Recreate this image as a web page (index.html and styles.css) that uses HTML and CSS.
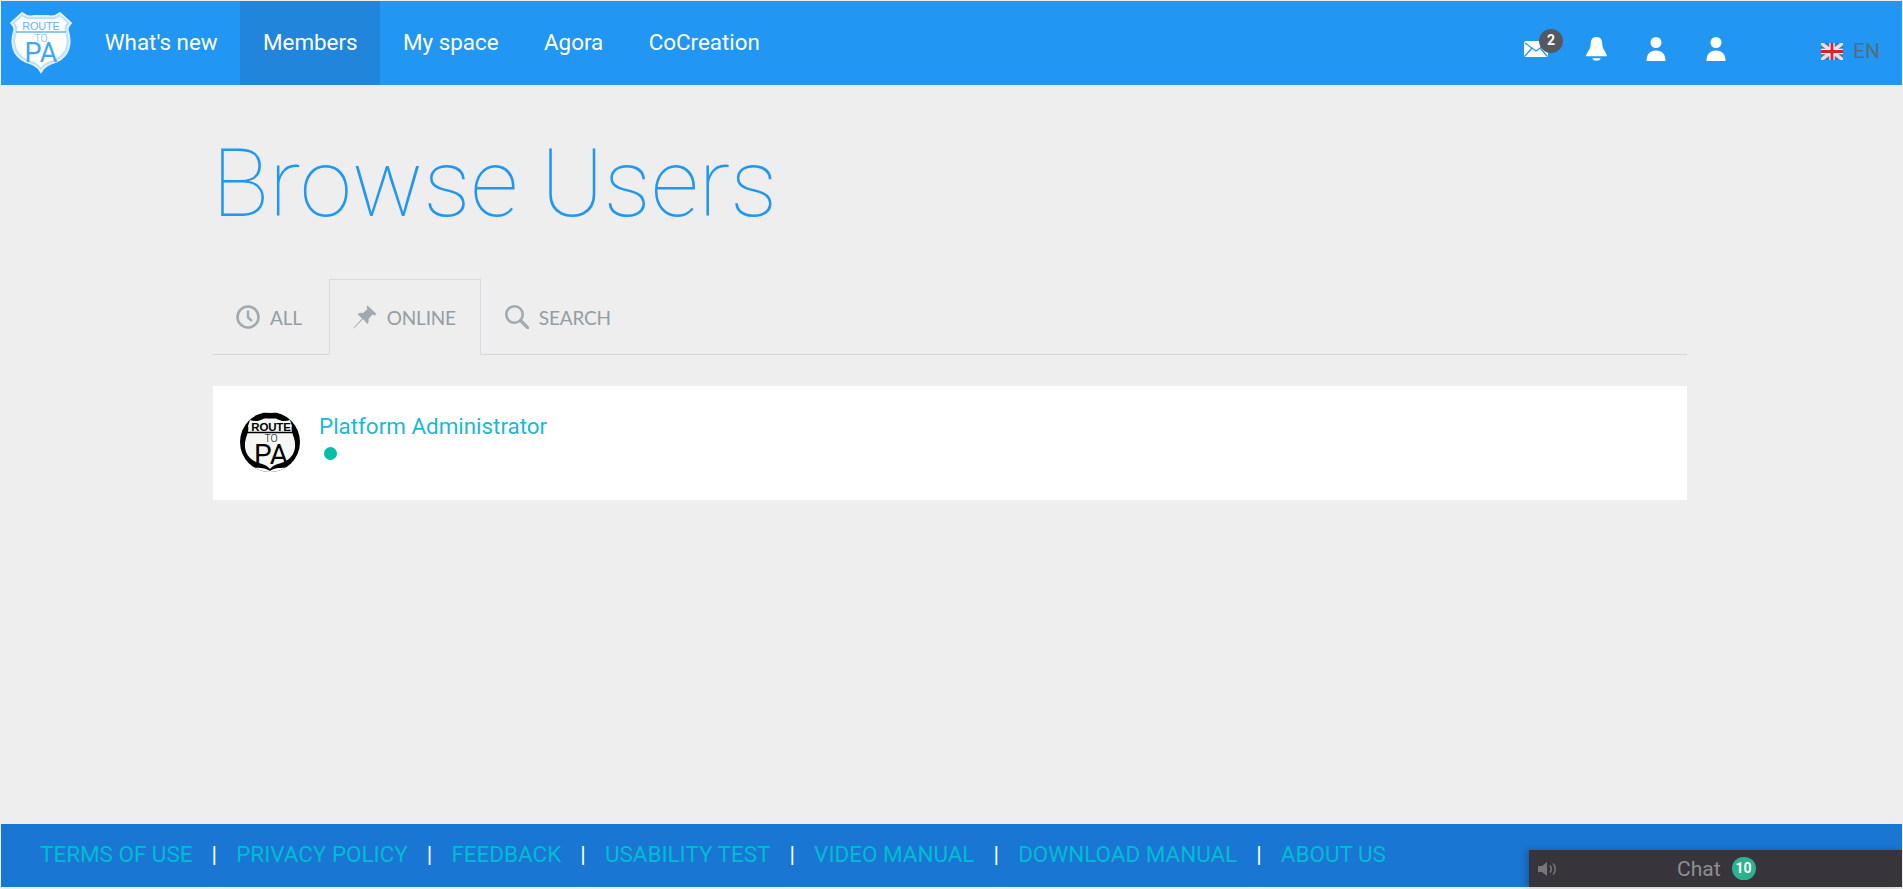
FILE: index.html
```html
<!DOCTYPE html>
<html lang="en">
<head>
<meta charset="utf-8">
<title>Browse Users</title>
<link rel="stylesheet" href="styles.css">
</head>
<body>
<div class="page">
  <header class="topbar">
    <a class="brand" href="#">
      <svg class="brand-logo" viewBox="0 0 64 62" width="64" height="62">
        <path d="M13 1 C17 4 21 5 24 4 H40 C43 5 47 4 51 1 L62 11 C59 14 58 16 59 19 C63 32 60 44 47 50 C41 52 35 54 32 60 C29 54 23 52 17 50 C4 44 1 32 5 19 C6 16 5 14 2 11 Z" fill="#bfe0fb" stroke="#e3f2fd" stroke-width="1.800"/>
        <path d="M13 4.500 C17 7 21 8 24 7 H40 C43 8 47 7 51 4.500 L58 11 C55.500 14 55 16 56 19 C60 31 57 42 45.500 47.500 C40 49.500 35 51 32 55.500 C29 51 24 49.500 18.500 47.500 C7 42 4 31 8 19 C9 16 8.500 14 6 11 Z" fill="#fff"/>
        <path d="M7 20 H57" stroke="#64b5f6" stroke-width="1.300"/>
        <text class="logo-route" x="32" y="18" text-anchor="middle">ROUTE</text>
        <text class="logo-to" x="32" y="30" text-anchor="middle">TO</text>
        <text class="logo-pa" x="32" y="50" text-anchor="middle">PA</text>
      </svg>
    </a>
    <nav class="mainnav">
      <a href="#" class="nav-item">What's new</a>
      <a href="#" class="nav-item is-active">Members</a>
      <a href="#" class="nav-item">My space</a>
      <a href="#" class="nav-item">Agora</a>
      <a href="#" class="nav-item">CoCreation</a>
    </nav>
    <div class="tools">
      <a href="#" class="tool tool-mail">
        <svg viewBox="0 0 24 16" width="24" height="16"><rect x="0" y="0" width="24" height="16" rx="2.500" fill="#fff"/><path d="M1 2 L12 10 L23 2 M1 15 L8 7 M23 15 L16 7" fill="none" stroke="#2196f3" stroke-width="1.300"/></svg>
        <span class="mail-badge">2</span>
      </a>
      <a href="#" class="tool">
        <svg viewBox="0 0 24 26" width="23" height="25"><path d="M12 0 C16.500 0 18 3 18 7 C18 13 22 15 23 20 H1 C2 15 6 13 6 7 C6 3 7.500 0 12 0 Z" fill="#fff"/><path d="M7.500 22 H16.500 C15.500 25.500 8.500 25.500 7.500 22 Z" fill="#fff"/></svg>
      </a>
      <a href="#" class="tool">
        <svg viewBox="0 0 20 25" width="20" height="25"><circle cx="10" cy="5.500" r="5.500" fill="#fff"/><path d="M0.500 24 C0.500 17 4 13.500 10 13.500 C16 13.500 19.500 17 19.500 24 Z" fill="#fff"/></svg>
      </a>
      <a href="#" class="tool">
        <svg viewBox="0 0 20 25" width="20" height="25"><circle cx="10" cy="5.500" r="5.500" fill="#fff"/><path d="M0.500 24 C0.500 17 4 13.500 10 13.500 C16 13.500 19.500 17 19.500 24 Z" fill="#fff"/></svg>
      </a>
    </div>
    <a href="#" class="lang">
      <svg viewBox="0 0 22 17" width="22" height="17"><rect width="22" height="17" fill="#5a6a9c"/><path d="M0 0 L22 17 M22 0 L0 17" stroke="#e6dfe2" stroke-width="3.500"/><path d="M11 0 V17 M0 8.500 H22" stroke="#eee" stroke-width="5.500"/><path d="M11 0 V17 M0 8.500 H22" stroke="#d8232f" stroke-width="2.800"/></svg>
      <span>EN</span>
    </a>
  </header>

  <main class="content">
    <h1 class="title">Browse Users</h1>
    <div class="tabs">
      <a href="#" class="tab tab-all">
        <svg viewBox="0 0 24 24" width="24" height="24"><circle cx="12" cy="12" r="10.500" fill="none" stroke="#a1aab0" stroke-width="2.600"/><path d="M12 5.500 V12.500 L16 16" fill="none" stroke="#a1aab0" stroke-width="2.400"/></svg>
        <span>ALL</span>
      </a>
      <a href="#" class="tab is-current">
        <svg viewBox="0 0 24 24" width="24" height="24"><path d="M14.500 0.500 L23.500 9 L21.500 10.500 L19.500 9.500 L15.500 14 C16 16 15.500 17.500 14.500 19 L10 14 L1 23.500 L0.500 23 L9 13.500 L4.500 9 C6 8 8 7.500 10 8 L14.500 4 L13.500 2 Z" fill="#a1aab0"/></svg>
        <span>ONLINE</span>
      </a>
      <a href="#" class="tab">
        <svg viewBox="0 0 24 24" width="24" height="24"><circle cx="9.500" cy="9.500" r="8.200" fill="none" stroke="#a1aab0" stroke-width="2.600"/><path d="M15.500 15.500 L23 23" fill="none" stroke="#a1aab0" stroke-width="3.200" stroke-linecap="round"/></svg>
        <span>SEARCH</span>
      </a>
    </div>
    <div class="user-card">
      <svg class="avatar" viewBox="0 0 60 60" width="60" height="60">
        <defs><clipPath id="av"><circle cx="30" cy="30" r="30"/></clipPath></defs>
        <g clip-path="url(#av)">
          <rect width="60" height="60" fill="#000"/>
          <path d="M0 0 H60 V14 C52 3 42 3 38 1 H22 C18 3 8 3 0 14 Z" fill="#fff"/>
          <path d="M0 60 H60 V50 C50 59 38 53 30 59 C22 53 10 59 0 50 Z" fill="#fff"/>
          <path d="M10 8 C15 10 20 9 24 6.500 H36 C40 9 45 10 50 8 L52 14 C51 17 52 20 54 26 C57 36 54 45 44 50 C38 52 33 53 30 57 C27 53 22 52 16 50 C6 45 3 36 6 26 C8 20 9 17 8 14 Z" fill="#f4f7f4"/>
          <path d="M7 20.500 H53" stroke="#000" stroke-width="1.500"/>
        </g>
        <text class="av-route" x="31" y="19" text-anchor="middle">ROUTE</text>
        <text class="av-to" x="31" y="30" text-anchor="middle">TO</text>
        <text class="av-pa" x="31" y="52" text-anchor="middle">PA</text>
      </svg>
      <div class="user-info">
        <a href="#" class="user-name">Platform Administrator</a>
        <span class="status-dot"></span>
      </div>
    </div>
  </main>

  <footer class="footer">
    <a href="#" class="foot-link">TERMS OF USE</a><span class="sep">|</span>
    <a href="#" class="foot-link">PRIVACY POLICY</a><span class="sep">|</span>
    <a href="#" class="foot-link">FEEDBACK</a><span class="sep">|</span>
    <a href="#" class="foot-link">USABILITY TEST</a><span class="sep">|</span>
    <a href="#" class="foot-link">VIDEO MANUAL</a><span class="sep">|</span>
    <a href="#" class="foot-link">DOWNLOAD MANUAL</a><span class="sep">|</span>
    <a href="#" class="foot-link">ABOUT US</a>
  </footer>

  <div class="chat">
    <svg class="chat-sound" viewBox="0 0 20 16" width="20" height="16"><path d="M0 5 H4 L9 1 V15 L4 11 H0 Z" fill="#777"/><path d="M12 4.500 C13.500 6.500 13.500 9.500 12 11.500 M15 2.500 C18 5.500 18 10.500 15 13.500" fill="none" stroke="#777" stroke-width="1.500"/></svg>
    <span class="chat-label">Chat</span>
    <span class="chat-badge">10</span>
  </div>
</div>
</body>
</html>
```
FILE: styles.css
```css
* { box-sizing: border-box; }
html, body { margin: 0; height: 100%; }
body { background: #eeeeee; font-family: Roboto, "Liberation Sans", sans-serif; overflow: hidden; }
a { text-decoration: none; }
.page { position: relative; display: flex; flex-direction: column; height: 889px; padding: 1px 1px 2px; }

.topbar { display: flex; align-items: stretch; height: 84px; background: #2196f3; flex: none; }
.brand { display: flex; align-items: center; width: 81px; padding: 0 0 0 8px; flex: none; }
.brand-logo { display: block; flex: none; }
.logo-route { font: 500 11px "Liberation Sans", sans-serif; fill: #64b5f6; letter-spacing: -0.2px; }
.logo-to { font: 300 10.500px Roboto, sans-serif; fill: #64b5f6; }
.logo-pa { font: 400 27px Roboto, sans-serif; fill: #42a5f5; }

.mainnav { display: flex; }
.nav-item { display: flex; align-items: center; padding: 0 22.700px 2px; color: #fff; font-size: 22.400px; height: 84px; }
.nav-item.is-active { background: #2185dc; }

.tools { display: flex; align-items: center; margin-left: auto; padding-top: 12px; }
.tool { position: relative; display: flex; justify-content: center; align-items: center; width: 60px; height: 30px; }
.mail-badge { position: absolute; left: 33px; top: -5px; width: 24px; height: 24px; border-radius: 50%; background: #54595f; color: #fff; font-size: 14px; font-weight: 700; text-align: center; line-height: 22px; }
.lang { display: flex; align-items: center; gap: 10px; margin-left: 75px; width: 81px; padding-top: 16px; color: #546e7a; font-size: 21px; font-weight: 400; }

.content { flex: 1; padding: 0 215px 0 211px; }
.title { margin: 43px 0 0 0; color: #2196f3; font-size: 94.600px; font-weight: 100; line-height: 112px; }
.tabs { display: flex; height: 76px; margin-top: 39px; border-bottom: 1px solid #d2d9de; }
.tab { display: flex; align-items: center; gap: 10px; height: 76px; padding: 0 23px 0 23px; border: 1px solid transparent; color: #949da3; font: 400 19px Lato, "Open Sans", sans-serif; letter-spacing: -0.2px; }
.tab-all { padding-right: 26px; }
.tab.is-current { padding-right: 24px; border-color: #d0dbe3; border-bottom-color: #eeeeee; }
.user-card { display: flex; align-items: flex-start; height: 114px; margin: 31px 0 0 1px; padding: 26px 0 0 27px; background: #fff; }
.avatar { display: block; flex: none; }
.av-route { font: 700 11.500px "Liberation Sans", sans-serif; fill: #000; letter-spacing: -0.2px; }
.av-to { font: 300 10.500px Roboto, sans-serif; fill: #000; }
.av-pa { font: 400 28px Roboto, sans-serif; fill: #000; }
.user-info { display: flex; flex-direction: column; margin-left: 19px; }
.user-name { color: #1bb8d8; font-size: 22.400px; font-weight: 400; line-height: 26px; margin-top: 1px; }
.status-dot { display: block; width: 13px; height: 13px; margin: 8px 0 0 5px; border-radius: 50%; background: #00bfa5; }

.footer { display: flex; align-items: center; gap: 0; height: 63px; padding: 0 0 3px 39px; background: #1976d2; flex: none; font-size: 22.450px; font-weight: 400; }
.foot-link { color: #00bcd4; }
.sep { color: #fff; width: 43.700px; text-align: center; }

.chat { position: absolute; right: 1px; bottom: 2px; display: flex; align-items: center; width: 373px; height: 37px; background: #37353b; box-shadow: -3px 0 6px rgba(0,0,0,.2); }
.chat-sound { margin-left: 9px; }
.chat-label { margin-left: 119px; color: #8f8f8f; font-size: 21px; font-weight: 400; }
.chat-badge { margin-left: 11px; width: 24px; height: 23px; border-radius: 12px; background: #2bb28e; color: #fff; font-size: 14px; font-weight: 700; text-align: center; line-height: 22px; }
```
